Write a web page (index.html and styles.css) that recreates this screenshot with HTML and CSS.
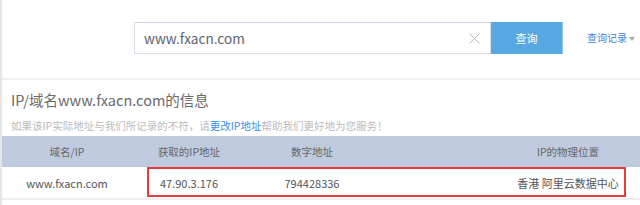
FILE: index.html
```
<html lang="zh-CN"><head><meta http-equiv="Content-Type" content="text/html; charset=UTF-8">
  <meta name="viewport" content="width=device-width,minimum-scale=1.0,maximum-scale=1.0,user-scalable=no" />
  <link rel="stylesheet" href="styles.css">
</head>
<body>
<div class="page">
  <div class="top">
    <div class="search-box">
      <span class="search-text">www.fxacn.com</span>
      <svg class="clear" width="11" height="11" viewBox="0 0 11 11"><path d="M0.5 0.5L10.5 10.5M10.5 0.5L0.5 10.5" stroke="#b9b9b9" stroke-width="1" fill="none"/></svg>
    </div>
    <button type="button" class="search-btn">查询</button>
    <a class="history">查询记录<span class="caret"></span></a>
  </div>
  <div class="sep"></div>

  <div class="info">
    <h1 class="title">IP/域名www.fxacn.com的信息</h1>
    <p class="tip">如果该IP实际地址与我们所记录的不符，请<a>更改IP地址</a>帮助我们更好地为您服务！</p>
  </div>

  <div class="result">
    <div class="row head">
      <div class="cell">域名/IP</div>
      <div class="cell">获取的IP地址</div>
      <div class="cell">数字地址</div>
      <div class="cell"></div>
      <div class="cell">IP的物理位置</div>
    </div>
    <div class="row body-row">
      <div class="cell">www.fxacn.com</div>
      <div class="cell">47.90.3.176</div>
      <div class="cell">794428336</div>
      <div class="cell"></div>
      <div class="cell">香港 阿里云数据中心</div>
      <div class="mark"></div>
    </div>
  </div>
</div>
</body>
</html>
```

FILE: styles.css
```
body {
  margin: 0;
  background: #f2f2f2;
  font-family: "Noto Sans CJK SC", sans-serif;
}

.page {
  height: 205px;
  border-left: 2px solid #e6e6e6;
  background: #fff;
  overflow: hidden;
}

.top {
  height: 78px;
  box-sizing: border-box;
  padding: 22px 0 0 132px;
  display: flex;
  align-items: flex-start;
}

.search-box {
  width: 357px;
  flex-shrink: 0;
  height: 32px;
  box-sizing: border-box;
  border: 1px solid #d7dfe9;
  border-top-color: #cdd5e0;
  display: flex;
  align-items: center;
  justify-content: space-between;
  padding: 0 10px 0 9px;
}

.search-text {
  font-size: 13.6px;
  color: #5c6272;
}

.clear {
  display: block;
}

.search-btn {
  width: 72px;
  height: 32px;
  flex-shrink: 0;
  border: 0;
  border-right: 1px solid #8fc4ec;
  background: #57a8e2;
  color: #fff;
  font-family: inherit;
  font-size: 11px;
  padding: 0;
}

.history {
  margin-left: 24px;
  line-height: 32px;
  font-size: 10px;
  color: #4a7fd8;
  white-space: nowrap;
}

.caret {
  display: inline-block;
  margin-left: 2px;
  vertical-align: middle;
  border-left: 3px solid transparent;
  border-right: 3px solid transparent;
  border-top: 4px solid #aaa;
}

.sep {
  height: 2px;
  background: #f0f0f0;
}

.info {
  padding: 0 0 0 9px;
  height: 56px;
  box-sizing: border-box;
}

.title {
  margin: 0;
  padding-top: 9px;
  font-size: 14.5px;
  line-height: 22px;
  font-weight: normal;
  color: #6a6a6a;
}

.tip {
  margin: 7px 0 0;
  font-size: 10.5px;
  line-height: 16px;
  color: #bbb;
}

.tip a {
  color: #3a8ee6;
}

.result {
  border-bottom: 2px solid #eee;
}

.row {
  display: grid;
  grid-template-columns: 130px 114px 132px 122px 136px;
  position: relative;
}

.head {
  height: 31px;
  background: #bfcadf;
  color: #666;
  font-size: 10.5px;
}

.body-row {
  height: 31px;
  color: #555;
  font-size: 11px;
}

.cell {
  display: flex;
  align-items: center;
  justify-content: center;
  white-space: nowrap;
}

.mark {
  position: absolute;
  left: 145px;
  top: 0;
  width: 479px;
  height: 30px;
  box-sizing: border-box;
  border: 2px solid #e63a3c;
}
```
